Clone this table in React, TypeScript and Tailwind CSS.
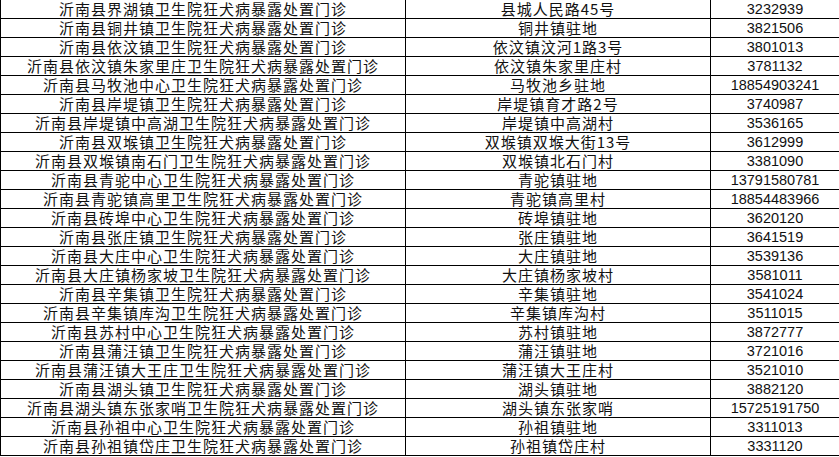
const rows: [string, string, string][] = [
  ["沂南县界湖镇卫生院狂犬病暴露处置门诊", "县城人民路45号", "3232939"],
  ["沂南县铜井镇卫生院狂犬病暴露处置门诊", "铜井镇驻地", "3821506"],
  ["沂南县依汶镇卫生院狂犬病暴露处置门诊", "依汶镇汶河1路3号", "3801013"],
  ["沂南县依汶镇朱家里庄卫生院狂犬病暴露处置门诊", "依汶镇朱家里庄村", "3781132"],
  ["沂南县马牧池中心卫生院狂犬病暴露处置门诊", "马牧池乡驻地", "18854903241"],
  ["沂南县岸堤镇卫生院狂犬病暴露处置门诊", "岸堤镇育才路2号", "3740987"],
  ["沂南县岸堤镇中高湖卫生院狂犬病暴露处置门诊", "岸堤镇中高湖村", "3536165"],
  ["沂南县双堠镇卫生院狂犬病暴露处置门诊", "双堠镇双堠大街13号", "3612999"],
  ["沂南县双堠镇南石门卫生院狂犬病暴露处置门诊", "双堠镇北石门村", "3381090"],
  ["沂南县青驼中心卫生院狂犬病暴露处置门诊", "青驼镇驻地", "13791580781"],
  ["沂南县青驼镇高里卫生院狂犬病暴露处置门诊", "青驼镇高里村", "18854483966"],
  ["沂南县砖埠中心卫生院狂犬病暴露处置门诊", "砖埠镇驻地", "3620120"],
  ["沂南县张庄镇卫生院狂犬病暴露处置门诊", "张庄镇驻地", "3641519"],
  ["沂南县大庄中心卫生院狂犬病暴露处置门诊", "大庄镇驻地", "3539136"],
  ["沂南县大庄镇杨家坡卫生院狂犬病暴露处置门诊", "大庄镇杨家坡村", "3581011"],
  ["沂南县辛集镇卫生院狂犬病暴露处置门诊", "辛集镇驻地", "3541024"],
  ["沂南县辛集镇库沟卫生院狂犬病暴露处置门诊", "辛集镇库沟村", "3511015"],
  ["沂南县苏村中心卫生院狂犬病暴露处置门诊", "苏村镇驻地", "3872777"],
  ["沂南县蒲汪镇卫生院狂犬病暴露处置门诊", "蒲汪镇驻地", "3721016"],
  ["沂南县蒲汪镇大王庄卫生院狂犬病暴露处置门诊", "蒲汪镇大王庄村", "3521010"],
  ["沂南县湖头镇卫生院狂犬病暴露处置门诊", "湖头镇驻地", "3882120"],
  ["沂南县湖头镇东张家哨卫生院狂犬病暴露处置门诊", "湖头镇东张家哨", "15725191750"],
  ["沂南县孙祖中心卫生院狂犬病暴露处置门诊", "孙祖镇驻地", "3311013"],
  ["沂南县孙祖镇岱庄卫生院狂犬病暴露处置门诊", "孙祖镇岱庄村", "3331120"],
];

export default function App() {
  return (
    <div className="w-[839px] h-[457px] bg-white overflow-hidden text-[#111]">
      {/* clinic table */}
      <div className="border-l border-black">
        {rows.map(([name, addr, phone]) => (
          <div
            key={name}
            className="grid grid-cols-[404px_305px_1fr] h-[19px] border-b border-black"
          >
            <div className="flex items-center justify-center text-[15px] leading-[18px] tracking-[1px] font-['Noto_Sans_CJK_SC',sans-serif] whitespace-nowrap">
              {name}
            </div>
            <div className="flex items-center justify-center border-l border-black text-[15px] leading-[18px] tracking-[1px] font-['Noto_Sans_CJK_SC',sans-serif] whitespace-nowrap">
              {addr}
            </div>
            <div className="flex items-center justify-center border-l border-black text-[14.5px] leading-[18px] font-['Liberation_Sans',sans-serif]">
              {phone}
            </div>
          </div>
        ))}
      </div>
    </div>
  );
}
